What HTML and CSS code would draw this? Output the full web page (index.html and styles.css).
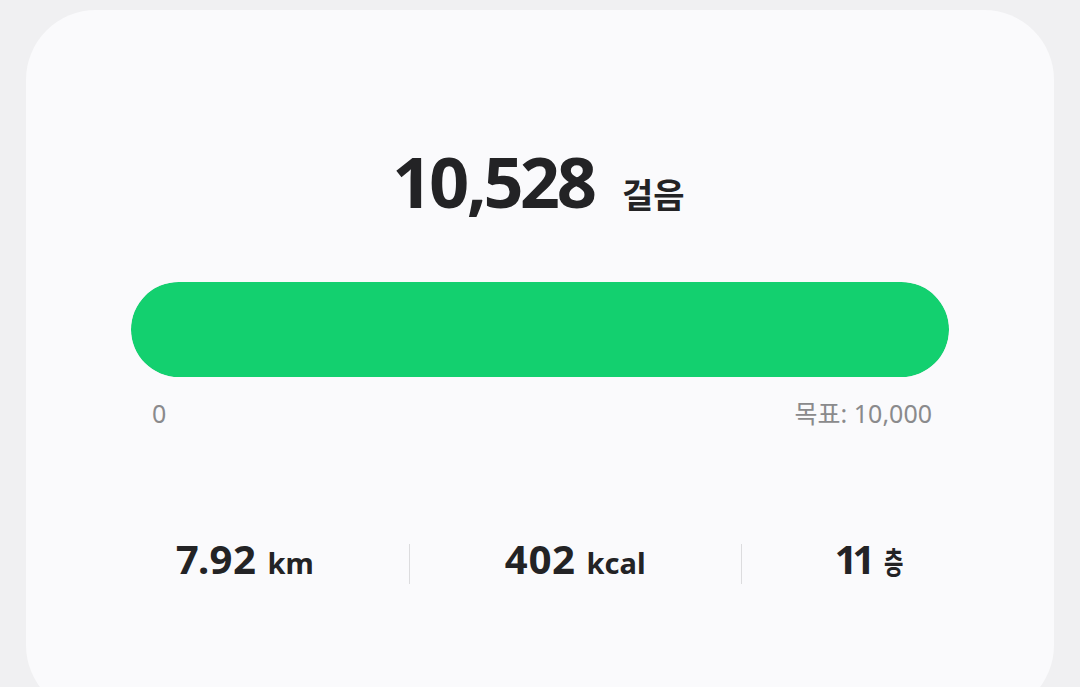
FILE: index.html
```html
<!DOCTYPE html>
<html lang="ko">
<head>
<meta charset="utf-8">
<link rel="stylesheet" href="styles.css">
</head>
<body>
<div class="card">
  <div class="headline">
    <span class="count">10,528</span>
    <span class="count-unit">걸음</span>
  </div>
  <div class="bar"><div class="bar-fill" style="width:100%"></div></div>
  <div class="bar-labels">
    <span>0</span>
    <span>목표: 10,000</span>
  </div>
  <div class="stats">
    <div class="stat"><span class="stat-value">7.92</span><span class="stat-unit">km</span></div>
    <div class="divider"></div>
    <div class="stat"><span class="stat-value">402</span><span class="stat-unit">kcal</span></div>
    <div class="divider"></div>
    <div class="stat"><span class="stat-value stat-value-tight">11</span><span class="stat-unit stat-unit-ko">층</span></div>
  </div>
</div>
</body>
</html>
```

FILE: styles.css
```css
html, body {
  margin: 0;
  padding: 0;
  background: #f0f0f2;
  height: 687px;
  overflow: hidden;
}
body {
  font-family: "Noto Sans", "Noto Sans CJK KR", sans-serif;
  color: #232325;
}
.card {
  margin: 10px 26px 0 26px;
  height: 705px;
  background: #fafafc;
  border-radius: 70px;
  box-sizing: border-box;
  padding: 127px 105px 0 105px;
  display: flex;
  flex-direction: column;
}
.headline {
  display: flex;
  justify-content: center;
  align-items: baseline;
  gap: 28px;
  height: 88px;
}
.count {
  font-size: 70px;
  font-weight: 700;
  line-height: 88px;
  letter-spacing: -3.5px;
  font-variant-numeric: proportional-nums;
}
.count-unit {
  font-family: "Noto Sans CJK KR", sans-serif;
  font-size: 34px;
  font-weight: 700;
}
.bar {
  margin-top: 57px;
  height: 95px;
  border-radius: 48px;
  background: #e4e4e8;
  overflow: hidden;
}
.bar-fill {
  height: 100%;
  background: #13d06f;
  border-radius: 48px;
}
.bar-labels {
  display: flex;
  justify-content: space-between;
  padding: 0 17px 0 21px;
  margin-top: 19px;
  font-family: "Noto Sans", "Noto Sans CJK KR", sans-serif;
  font-size: 25px;
  color: #8a8a8c;
  line-height: 34px;
}
.stats {
  margin-top: 104px;
  display: flex;
  justify-content: center;
  align-items: center;
  gap: 95px;
}
.stat {
  display: flex;
  align-items: baseline;
  gap: 12px;
  padding-bottom: 10px;
}
.stat-value {
  font-size: 40px;
  font-weight: 700;
  line-height: 50px;
  font-variant-numeric: proportional-nums;
}
.stat-value-tight {
  letter-spacing: -3px;
}
.stat-unit {
  font-family: "Noto Sans", "Noto Sans CJK KR", sans-serif;
  font-size: 29px;
  font-weight: 700;
}
.stat-unit-ko {
  display: inline-block;
  font-size: 31px;
  transform: scaleX(0.68);
  transform-origin: left center;
  margin-right: -9px;
}
.divider {
  width: 1px;
  height: 40px;
  background: #dcdcde;
}
```
